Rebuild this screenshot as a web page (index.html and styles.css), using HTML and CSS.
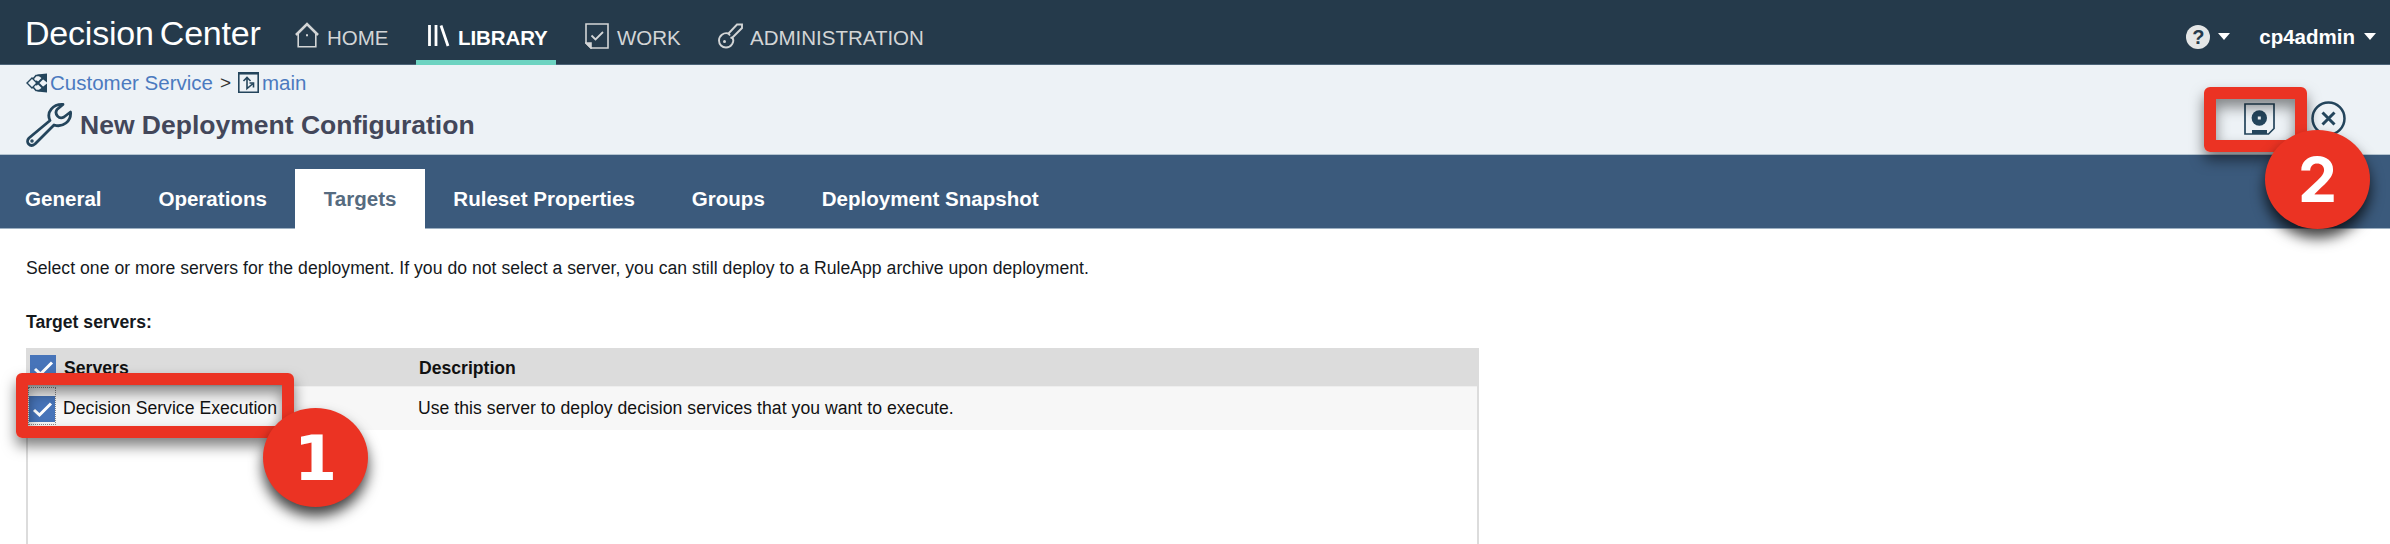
FILE: index.html
```html
<!DOCTYPE html>
<html lang="en">
<head>
<meta charset="utf-8">
<title>Decision Center</title>
<link rel="stylesheet" href="styles.css">
</head>
<body>
<header class="topbar">
  <div class="brand"><span>Decision</span><span>Center</span></div>
  <nav class="nav">
    <a class="nav-item home"><svg width="24" height="26" viewBox="0 0 24 26" fill="none" stroke="#d3d5d6"><path stroke-width="2.6" d="M1 13 12 2 23 13"/><path stroke-width="1.6" d="M3.2 11V24.7H20.8V11"/><path stroke-width="2" d="M11 13.3h2"/></svg><span>HOME</span></a>
    <a class="nav-item library active"><svg width="22" height="22" viewBox="0 0 22 22" fill="none" stroke="#fff" stroke-width="2.8"><path d="M1.5 0V21M8 0V21M13 .5 20 21"/></svg><span>LIBRARY</span></a>
    <a class="nav-item work"><svg width="24" height="26" viewBox="0 0 24 26" fill="none" stroke="#d3d5d6" stroke-width="1.6"><path d="M1 1H23V25H6L1 20Z"/><path fill="#d3d5d6" d="M1 20H6V25Z"/><path stroke-width="1.8" d="M6.5 12.5 10.5 16.5 18 9"/></svg><span>WORK</span></a>
    <a class="nav-item admin"><svg width="25" height="26" viewBox="0 0 25 26" fill="none" stroke="#d3d5d6" stroke-width="1.9"><path d="M10.500 10.500 19 1.500H24V5L14.500 14.500C17 19 13 24.500 8 24.500C4 24.500 1 21.500 1 17.500C1 13 5.500 9 10.500 10.500Z"/><path d="M10.500 10.500 12 12.500M14.500 14.500 12.500 15"/><circle cx="6.500" cy="18.500" r="1.500" fill="#d3d5d6" stroke="none"/></svg><span>ADMINISTRATION</span></a>
  </nav>
  <div class="user">
    <span class="help">?</span><i class="caret"></i>
    <span class="username">cp4admin</span><i class="caret"></i>
  </div>
</header>
<section class="pagehead">
  <div>
    <div class="crumbs">
      <svg class="crumb-flow" width="22" height="20" viewBox="0 0 22 20" fill="none" stroke="#24455c" stroke-width="1.4"><path d="M1 10 6 5 11 10 6 15Z"/><path stroke-width="1.6" d="M7 6 10 2.500H14M7 14 10 17.500H14"/><path stroke-width="2" d="M10 12 17 5M10 8 17 15"/><path fill="#24455c" stroke="none" d="M11 1.500 21 .5V9.500ZM11 18.500 21 19.500V10.500Z"/></svg>
      <a>Customer Service</a><span class="sep">&gt;</span>
      <svg class="crumb-branch" width="21" height="21" viewBox="0 0 21 21" fill="none" stroke="#24455c" stroke-width="1.6"><path d="M.8 .8H20.200V20.200H.8Z"/><path stroke-width="2.500" d="M0 1.300H21"/><path d="M5.500 9 9 5.500 12.500 9M9 5.500V16.500L14.500 12M11.500 11H15.500V15.500"/></svg>
      <a>main</a>
    </div>
    <h1><svg width="46" height="44" viewBox="0 0 46 44" fill="none" stroke="#24455c" stroke-width="2.800" stroke-linejoin="round"><path d="M24 17.500C20 9 27 1 37 1.500L31 6.500C28 11 33 17 38 14L44.500 9C45.500 18 37 25 28 22L9 41C4 45-1 39 3 35Z"/><circle cx="6" cy="38" r="1" stroke-width="1.500"/></svg>New Deployment Configuration</h1>
  </div>
  <div class="actions">
    <svg width="31" height="32" viewBox="0 0 31 32" fill="none" stroke="#24455c" stroke-width="1.700"><path d="M1 1H30V25.500L24.500 31H1Z"/><circle cx="15.300" cy="15" r="7.700" fill="#24455c" stroke="none"/><path fill="#24455c" stroke="none" d="M8 27H23V31H8Z"/><path fill="#eef2f5" stroke="none" d="M13.800 13.500h3v3h-3z"/></svg>
    <svg width="35" height="35" viewBox="0 0 35 35" fill="none" stroke="#24455c" stroke-width="2.500"><circle cx="17.500" cy="17.500" r="16"/><path stroke-width="3" d="M11.500 11.500 23.500 23.500M23.500 11.500 11.500 23.500"/></svg>
  </div>
</section>
<nav class="tabs">
  <a>General</a><a>Operations</a><a class="selected">Targets</a><a>Ruleset Properties</a><a>Groups</a><a>Deployment Snapshot</a>
</nav>
<main class="content">
  <p class="intro">Select one or more servers for the deployment. If you do not select a server, you can still deploy to a RuleApp archive upon deployment.</p>
  <h2>Target servers:</h2>
  <div class="grid">
    <div class="row head"><div class="cell first"><span class="check"><svg width="26" height="26" viewBox="0 0 26 26"><path d="M5 14 10.500 19 22 7.500" fill="none" stroke="#fff" stroke-width="3"/></svg></span><span>Servers</span></div><div class="cell">Description</div></div>
    <div class="row item"><div class="cell first"><span class="focus"><span class="check"><svg width="26" height="26" viewBox="0 0 26 26"><path d="M5 14 10.500 19 22 7.500" fill="none" stroke="#fff" stroke-width="3"/></svg></span></span><span>Decision Service Execution</span></div><div class="cell desc">Use this server to deploy decision services that you want to execute.</div></div>
  </div>
</main>
<div class="frame frame-row"></div>
<div class="frame frame-save"></div>
<div class="badge badge-one">1</div>
<div class="badge badge-two">2</div>
</body>
</html>
```
FILE: styles.css
```css
* { box-sizing: border-box; }
body { margin: 0; height: 544px; overflow: hidden; position: relative; background: #fff; font-family: "Liberation Sans", Arial, sans-serif; color: #15191d; }
svg { display: block; flex: none; }
a, span, h1, h2, p, .cell { white-space: nowrap; }
.topbar { height: 65px; display: flex; background: #253a4b; border-bottom: 1px solid #4c6478; }
.brand { display: flex; gap: 6px; padding: 14px 0 0 25px; width: 295px; font-size: 34px; line-height: 38px; color: #fff; letter-spacing: -0.2px; }
.nav { display: flex; font-size: 20.500px; color: #d3d5d6; }
.nav-item { display: flex; height: 65px; padding-top: 22px; line-height: 32px; }
.home { width: 121px; }
.home span { margin-left: 8px; }
.library { width: 140px; padding-left: 12px; font-weight: bold; color: #fff; border-bottom: 5px solid #6dd3c1; letter-spacing: -0.1px; }
.library svg { margin-top: 3px; }
.library span { margin-left: 8px; }
.work { padding-left: 29px; width: 162px; }
.work svg { margin-top: 1px; }
.work span { margin-left: 8px; }
.admin svg { margin-top: 1px; }
.admin span { margin-left: 7px; }
.user { display: flex; align-items: flex-start; margin-left: auto; padding: 25px 14px 0 0; color: #fff; }
.help { width: 24px; height: 24px; border-radius: 50%; background: #e4e6e6; color: #253a4b; font-weight: bold; font-size: 20px; line-height: 24px; text-align: center; }
.caret { margin: 8px 0 0 8px; border: 6px solid transparent; border-top: 7px solid #fff; border-bottom: 0; }
.username { margin-left: 29px; font-size: 20.500px; line-height: 24px; font-weight: bold; }
.username + .caret { margin-left: 9px; }
.pagehead { height: 90px; display: flex; justify-content: space-between; background: #edf2f6; border-bottom: 1px solid #b4c4d0; padding: 6px 44px 0 26px; }
.crumbs { display: flex; height: 24px; font-size: 20.500px; line-height: 24px; color: #4b7abf; }
.crumb-flow { margin: 2px 2px 0 0; }
.sep { margin: 0 7px; color: #333; font-size: 19px; }
.crumb-branch { margin: 1px 3px 0 0; }
h1 { display: flex; margin: 8px 0 0; font-size: 26.500px; line-height: 44px; color: #43475a; }
h1 svg { margin-right: 8px; }
.actions { display: flex; gap: 36px; padding-top: 30px; }
.actions svg:first-child { margin-top: 2px; }
.tabs { height: 74px; display: flex; align-items: flex-end; background: #3b5a7c; border-bottom: 1px solid #9db0c2; font-size: 20.550px; font-weight: bold; color: #fff; }
.tabs a { height: 59px; line-height: 59px; padding: 0 28.450px; }
.tabs a:first-child { padding-left: 25px; }
.tabs .selected { height: 60px; margin-bottom: -1px; background: #fff; color: #566b80; }
.content { padding: 27px 0 0 26px; font-size: 17.600px; }
.intro { margin: 0; line-height: 24px; letter-spacing: 0.035px; }
h2 { margin: 30px 0 0; font-size: 17.600px; line-height: 24px; }
.grid { margin-top: 14px; width: 1453px; height: 196px; border: solid #dcdcdc; border-width: 0 2px; color: #111; }
.row { display: flex; }
.head { height: 38px; background: #dcdcdc; font-weight: bold; line-height: 40px; }
.item { height: 44px; background: #f7f7f7; line-height: 43px; border-top: 1px solid #eee; }
.first { display: flex; width: 391px; letter-spacing: 0.03px; }
.desc { margin-left: -1px; letter-spacing: 0.04px; }
.check { width: 26px; height: 26px; background: #4774b9; }
.head .check { margin: 7px 8px 0 2px; }
.focus { width: 28px; height: 38px; padding-top: 8px; border: 1px dotted #888; margin-right: 7px; }
.focus .check { display: block; }
.frame { position: absolute; height: 65px; border: 12px solid #eb3323; border-radius: 6px; box-shadow: 0 8px 14px rgba(0,0,0,.5), inset 0 8px 14px rgba(0,0,0,.45); }
.frame-row { left: 16px; top: 373px; width: 278px; }
.frame-save { left: 2204px; top: 87px; width: 103px; }
.badge { position: absolute; width: 105px; height: 99px; border-radius: 50%; background: #eb3323; color: #fff; text-align: center; font-weight: bold; font-size: 62px; box-shadow: 0 9px 14px rgba(0,0,0,.75); }
.badge-one { left: 263px; top: 408px; line-height: 101px; font-family: "DejaVu Sans", sans-serif; }
.badge-two { left: 2265px; top: 130px; line-height: 99px; font-family: Inter, sans-serif; }
```
